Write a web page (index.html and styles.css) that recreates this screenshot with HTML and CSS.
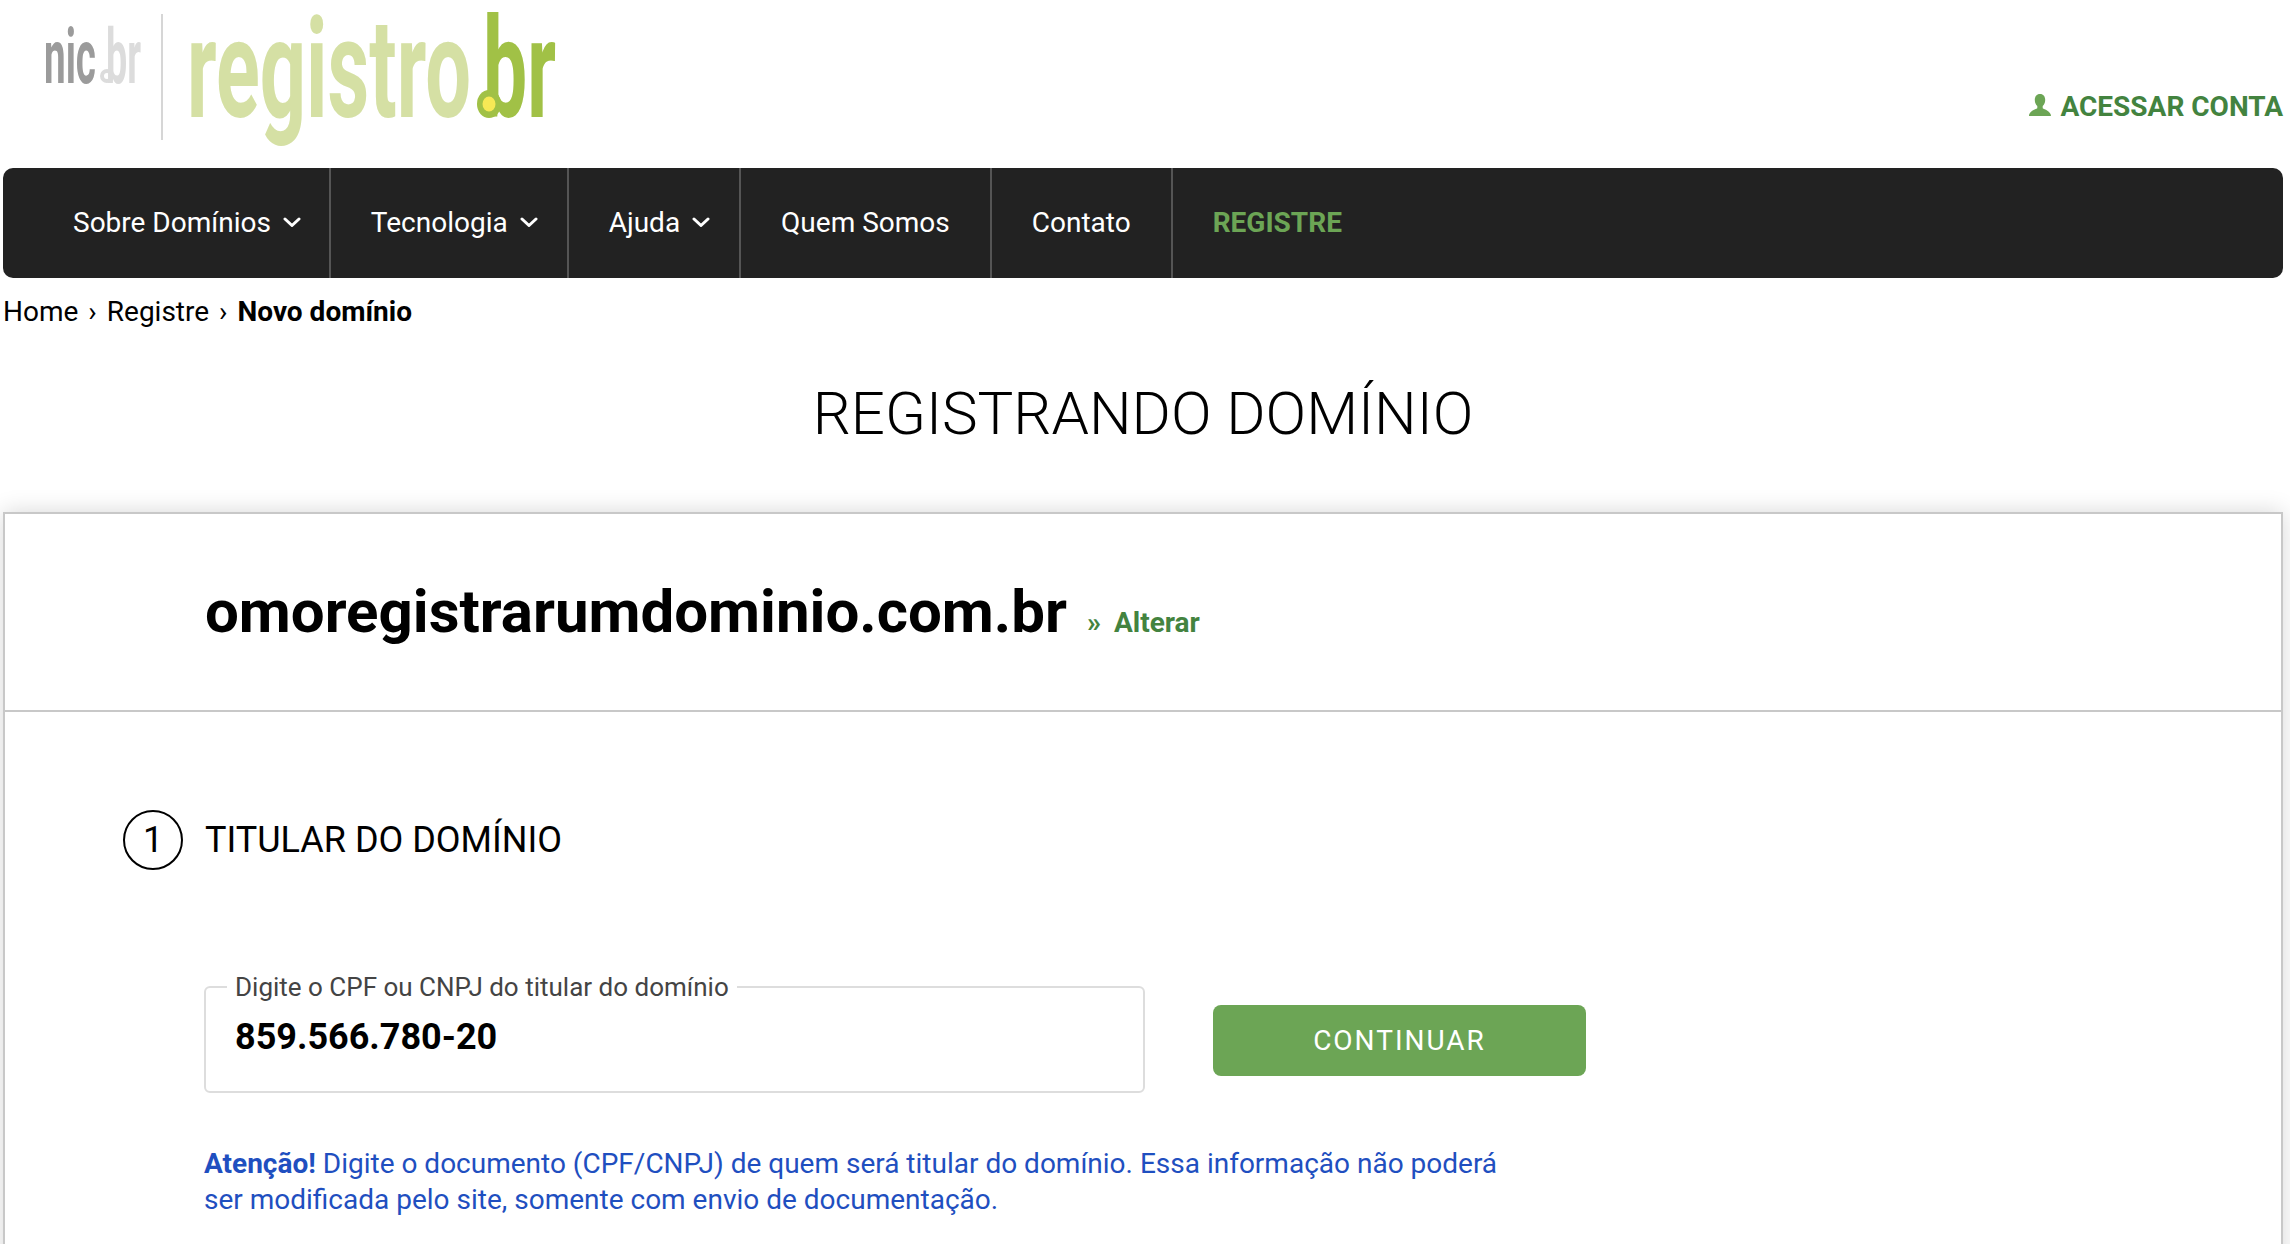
FILE: index.html
```html
<!DOCTYPE html>
<html lang="pt-BR">
<head>
<meta charset="utf-8">
<title>Registro.br</title>
<link rel="stylesheet" href="styles.css">
</head>
<body>
<div class="page">
  <header class="top">
    <a class="logo" href="#" aria-label="nic.br registro.br">
      <svg width="600" height="168" viewBox="0 0 600 168">
        <text class="lg nic" x="44" y="83" font-size="76" textLength="52" lengthAdjust="spacingAndGlyphs">nic</text>
        <circle class="nicdot" cx="107" cy="76" r="5" />
        <text class="lg nicbr" x="106" y="83" font-size="76" textLength="35" lengthAdjust="spacingAndGlyphs">br</text>
        <rect class="sep" x="161" y="14" width="2" height="126" />
        <text class="lg reg" x="187" y="117" font-size="140" textLength="284" lengthAdjust="spacingAndGlyphs">registro</text>
        <ellipse class="brdot" cx="489" cy="104" rx="12" ry="14" />
        <text class="lg br" x="483" y="117" font-size="140" textLength="73" lengthAdjust="spacingAndGlyphs">br</text>
        <ellipse class="yel" cx="489" cy="104" rx="6.500" ry="7.500" />
      </svg>
    </a>
    <a class="account" href="#">
      <svg class="person" width="22" height="22" viewBox="0 0 22 22"><path d="M11 0c3.400 0 5.200 2.600 5.200 6 0 2.700-1.100 4.700-2.500 6v2.200c1.500.9 8.300 3 8.300 7.800H0c0-4.800 6.800-6.900 8.300-7.800V12C6.900 10.700 5.800 8.700 5.800 6 5.800 2.600 7.600 0 11 0z"/></svg>
      <span>ACESSAR CONTA</span>
    </a>
  </header>

  <nav class="nav">
    <a class="item first" href="#">Sobre Domínios<svg class="chev" width="18" height="10" viewBox="0 0 18 10"><path d="M2 2l7 6.500 7-6.500"/></svg></a>
    <a class="item drop" href="#">Tecnologia<svg class="chev" width="18" height="10" viewBox="0 0 18 10"><path d="M2 2l7 6.500 7-6.500"/></svg></a>
    <a class="item drop" href="#">Ajuda<svg class="chev" width="18" height="10" viewBox="0 0 18 10"><path d="M2 2l7 6.500 7-6.500"/></svg></a>
    <a class="item" href="#">Quem Somos</a>
    <a class="item" href="#">Contato</a>
    <a class="item active" href="#">REGISTRE</a>
  </nav>

  <div class="crumbs">
    <a href="#">Home</a><span class="sp">›</span><a href="#">Registre</a><span class="sp">›</span><strong>Novo domínio</strong>
  </div>

  <h1 class="title">REGISTRANDO DOMÍNIO</h1>

  <main class="card">
    <div class="domain">
      <span class="dname">omoregistrarumdominio.com.br</span>
      <a class="alter" href="#"><span class="raquo">»</span>Alterar</a>
    </div>
    <section class="step">
      <div class="stephead">
        <span class="num">1</span>
        <h2>TITULAR DO DOMÍNIO</h2>
      </div>
      <div class="formrow">
        <fieldset class="field">
          <legend>Digite o CPF ou CNPJ do titular do domínio</legend>
          <div class="value">859.566.780-20</div>
        </fieldset>
        <button class="btn" type="button">CONTINUAR</button>
      </div>
      <p class="note"><strong>Atenção!</strong> Digite o documento (CPF/CNPJ) de quem será titular do domínio. Essa informação não poderá ser modificada pelo site, somente com envio de documentação.</p>
    </section>
  </main>
</div>
</body>
</html>
```

FILE: styles.css
```css
* { box-sizing: border-box; }
html, body { margin: 0; height: 1244px; overflow: hidden; background: #fff; }
body { font-family: Roboto, "Liberation Sans", sans-serif; font-size: 28px; color: #000; }
a { color: inherit; text-decoration: none; }

.page { width: 2283px; padding-left: 3px; }

.top { height: 168px; display: flex; justify-content: space-between; align-items: flex-start; }
.logo { display: block; height: 168px; margin-left: -3px; }
.logo svg { display: block; }
.lg { font-family: Roboto, sans-serif; font-weight: 700; }
.nic { fill: #9b9b9b; }
.nicbr { fill: #dcdcdc; }
.nicdot { fill: none; stroke: #dcdcdc; stroke-width: 4; }
.sep { fill: #d6d6d6; }
.reg { fill: #d5e0a4; }
.br { fill: #a1c146; }
.brdot { fill: #a1c146; }
.yel { fill: #f7e955; }

.account { display: flex; align-items: center; gap: 9px; margin-top: 92px; height: 30px; color: #43833f; font-weight: 700; line-height: 30px; }
.person { fill: #6ca555; display: block; margin-bottom: 4px; }

.nav { height: 110px; background: #222; border-radius: 10px; display: flex; align-items: stretch; color: #fff; }
.item { display: flex; align-items: center; padding: 0 40px 2px; border-right: 2px solid #555; }
.item.first { padding-left: 70px; padding-right: 28px; }
.item.drop { padding-right: 29px; }
.item.active { border-right: 0; color: #6ca555; font-weight: 700; }
.chev { margin-left: 12px; display: block; }
.chev path { fill: none; stroke: #fff; stroke-width: 3; stroke-linecap: round; stroke-linejoin: round; }

.crumbs { height: 45px; margin-top: 11px; line-height: 46px; }
.sp { margin: 0 10px; }
.crumbs strong { font-weight: 700; }

.title { margin: 0; height: 178px; padding-top: 44px; text-align: center; font-weight: 300; font-size: 60px; line-height: 72px; }

.card { height: 900px; background: #fff; border: 2px solid #c8c8c8; border-bottom: 0; box-shadow: 0 0 22px rgba(0,0,0,.16); }

.domain { height: 198px; border-bottom: 2px solid #c8c8c8; padding: 0 0 0 200px; display: flex; align-items: center; gap: 20px; }
.dname { font-size: 60px; font-weight: 700; line-height: 70px; }
.alter { color: #43833f; font-weight: 700; margin-top: 20px; }
.raquo { margin-right: 13px; }

.step { padding: 98px 0 0 118px; }
.stephead { display: flex; align-items: center; gap: 22px; }
.num { width: 60px; height: 60px; border: 2px solid #000; border-radius: 50%; display: flex; align-items: center; justify-content: center; font-size: 36px; }
.stephead h2 { margin: 0; font-size: 36px; font-weight: 400; line-height: 60px; }

.formrow { display: flex; margin-top: 101px; padding-left: 81px; align-items: flex-start; gap: 68px; }
.field { width: 941px; height: 122px; margin: 0; padding: 0 29px; border: 2px solid #ddd; border-radius: 6px; }
.field legend { padding: 0 8px; margin-left: -8px; font-size: 26px; line-height: 32px; color: #444; }
.value { font-size: 36px; font-weight: 700; line-height: 50px; margin-top: 9px; }
.btn { width: 373px; height: 71px; margin-top: 34px; border: 0; border-radius: 8px; background: #6ca555; color: #fff; font-family: inherit; font-size: 28px; letter-spacing: 2px; }

.note { margin: 53px 0 0 81px; width: 1320px; line-height: 36px; color: #1f4fc0; }
```
